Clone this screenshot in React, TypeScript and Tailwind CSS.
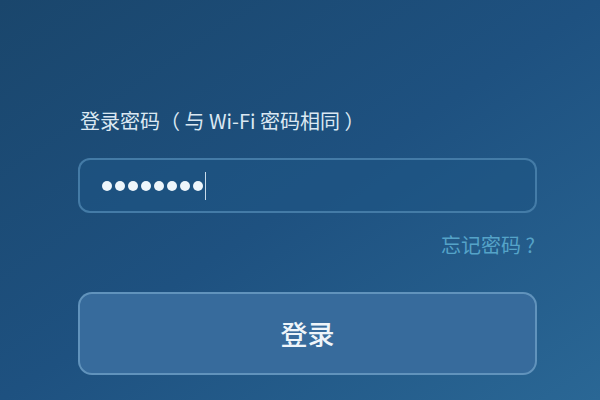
export default function App() {
  return (
    <div
      className="w-[600px] h-[400px] overflow-hidden bg-gradient-to-br from-[#1a466c] via-[#1e5180] to-[#2a6795] text-white"
      style={{ fontFamily: '"Noto Sans CJK SC", "Noto Sans", sans-serif' }}
    >
      <div className="pl-[78px] pr-[63px] pt-[106px]">
        <div className="pl-[2px] text-[20px] leading-[30px] text-[#dbe8f2]">
          登录密码（ 与 Wi-Fi 密码相同 ）
        </div>

        <div className="mt-[22px] h-[55px] rounded-[12px] border-2 border-[#4f86b0]/80 bg-[#1e5584]/60 flex items-center pl-[22px]">
          <div className="flex items-center gap-[3px]">
            {Array.from({ length: 8 }).map((_, i) => (
              <span key={i} className="w-[10px] h-[10px] rounded-full bg-[#eef6fb]" />
            ))}
          </div>
          <span className="ml-[2px] w-[1px] h-[28px] bg-[#c8dbea]" />
        </div>

        <div className="mt-[18px] flex justify-end pr-[2px]">
          <span className="text-[20px] leading-[28px] text-[#55a3c8]">忘记密码 ?</span>
        </div>

        <button className="mt-[33px] w-full h-[83px] rounded-[14px] border-2 border-[#6c9dc4]/80 bg-[#376b9c] flex items-center justify-center">
          <span className="text-[27px] leading-none font-medium text-[#eef5fa]">登录</span>
        </button>
      </div>
    </div>
  )
}
